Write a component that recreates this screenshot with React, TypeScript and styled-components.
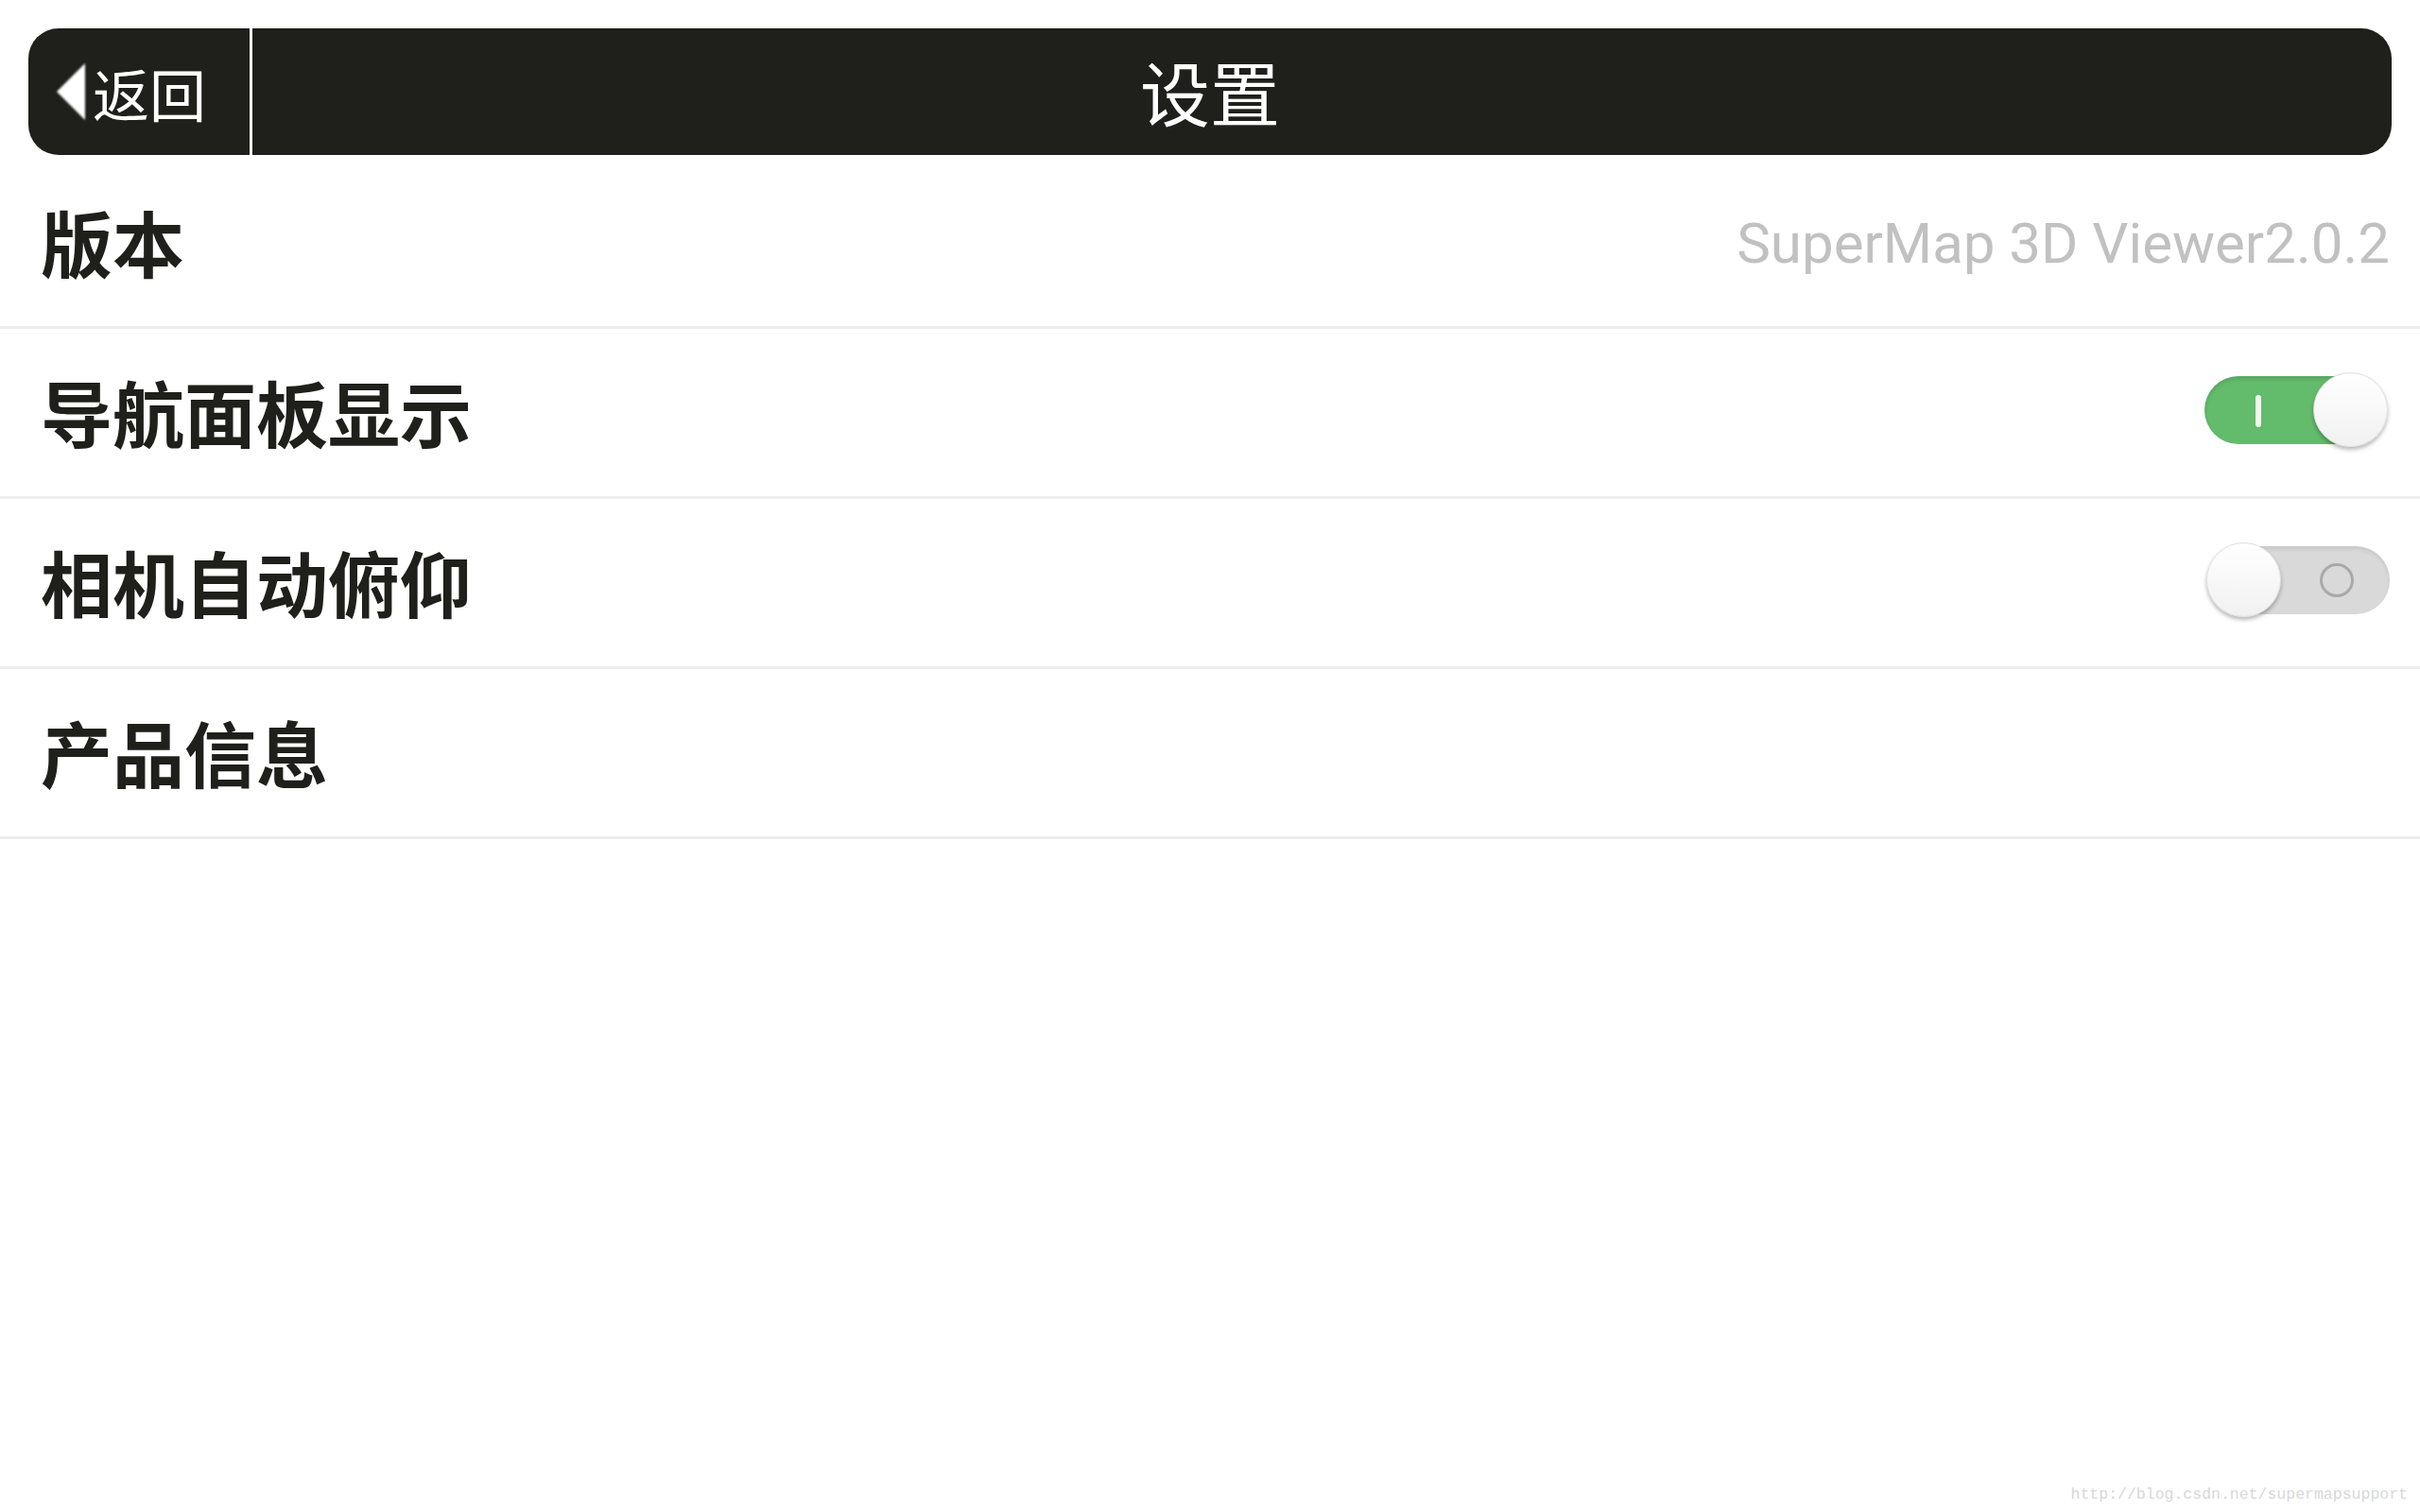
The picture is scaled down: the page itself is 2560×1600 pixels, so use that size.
import React from "react";
import styled, { createGlobalStyle } from "styled-components";

const GlobalStyle = createGlobalStyle`
  html, body {
    margin: 0;
    padding: 0;
    background: #ffffff;
  }
  body {
    width: 2560px;
    height: 1600px;
    overflow: hidden;
    font-family: "Noto Sans CJK SC", "Noto Sans", sans-serif;
  }
`;

const Page = styled.div`
  position: relative;
  width: 2560px;
  height: 1600px;
  background: #ffffff;
  display: flex;
  flex-direction: column;
`;

const Header = styled.header`
  margin: 30px 30px 0;
  height: 134px;
  background: #1f1f1b;
  border-radius: 32px;
  display: grid;
  grid-template-columns: 237px 1fr 237px;
  align-items: stretch;
  overflow: hidden;
`;

const BackButton = styled.button`
  display: flex;
  align-items: center;
  gap: 8px;
  padding: 0 0 0 30px;
  margin: 0;
  border: none;
  border-right: 3px solid #ffffff;
  background: transparent;
  color: #ffffff;
  font-family: "Noto Sans CJK SC", sans-serif;
  font-size: 60px;
  font-weight: 400;
  line-height: 1;
  cursor: pointer;
`;

const BackArrow = styled.span`
  width: 0;
  height: 0;
  border-top: 30px solid transparent;
  border-bottom: 30px solid transparent;
  border-right: 30px solid #ffffff;
  filter: blur(0.8px);
`;

const BackLabel = styled.span`
  display: block;
  margin-top: 2px;
`;

const Title = styled.h1`
  margin: 0;
  display: flex;
  align-items: center;
  justify-content: center;
  color: #ffffff;
  font-family: "Noto Sans CJK SC", sans-serif;
  font-size: 74px;
  font-weight: 400;
  line-height: 1;
  padding-bottom: 2px;
`;

const List = styled.div`
  display: flex;
  flex-direction: column;
  padding-top: 4px;
`;

const Row = styled.div`
  height: 177px;
  border-bottom: 3px solid #ededed;
  display: flex;
  align-items: center;
  justify-content: space-between;
  padding: 0 30px 0 43px;
`;

const Label = styled.span`
  color: #1f1f1b;
  font-family: "Noto Sans CJK SC", sans-serif;
  font-size: 76px;
  font-weight: 700;
  line-height: 1;
  margin-top: -4px;
`;

const Value = styled.span`
  color: #c1c1c1;
  font-family: Roboto, "Noto Sans", sans-serif;
  font-size: 60px;
  font-weight: 400;
  line-height: 1;
  margin-right: 2px;
  margin-top: 2px;
`;

const SwitchBox = styled.div<{ $on: boolean }>`
  position: relative;
  width: 196px;
  height: 80px;
  margin-top: -6px;
  margin-right: ${(p) => (p.$on ? "4px" : "0px")};
`;

const Track = styled.div<{ $on: boolean }>`
  position: absolute;
  top: 4px;
  bottom: 4px;
  left: 2px;
  right: 2px;
  border-radius: 36px;
  background: ${(p) => (p.$on ? "#63bb6c" : "#d9d9d9")};
  box-shadow: inset 0 3px 4px rgba(0, 0, 0, ${(p) => (p.$on ? 0.12 : 0.08)});
`;

const OnMark = styled.span`
  position: absolute;
  left: 54px;
  top: 20px;
  width: 6px;
  height: 34px;
  border-radius: 3px;
  background: rgba(255, 255, 255, 0.9);
`;

const OffMark = styled.span`
  position: absolute;
  right: 38px;
  top: 18px;
  width: 30px;
  height: 30px;
  border-radius: 50%;
  border: 3px solid #a9a9a9;
`;

const Knob = styled.span<{ $on: boolean }>`
  position: absolute;
  top: 0;
  ${(p) => (p.$on ? "right: 0;" : "left: 0;")}
  width: 77px;
  height: 77px;
  border-radius: 50%;
  background: linear-gradient(#ffffff, #f1f1f1);
  border: 1px solid #dedede;
  box-shadow: 0 3px 4px rgba(0, 0, 0, 0.28);
`;

const Watermark = styled.div`
  position: absolute;
  right: 13px;
  bottom: 10px;
  color: #d8d8d8;
  font-family: "Liberation Mono", monospace;
  font-size: 16.5px;
  line-height: 1;
`;

function Toggle({ on }: { on: boolean }) {
  return (
    <SwitchBox $on={on}>
      <Track $on={on}>{on ? <OnMark /> : <OffMark />}</Track>
      <Knob $on={on} />
    </SwitchBox>
  );
}

export default function App() {
  return (
    <Page>
      <GlobalStyle />
      <Header>
        <BackButton>
          <BackArrow />
          <BackLabel>返回</BackLabel>
        </BackButton>
        <Title>设置</Title>
        <div />
      </Header>
      <List>
        <Row>
          <Label>版本</Label>
          <Value>SuperMap 3D Viewer2.0.2</Value>
        </Row>
        <Row>
          <Label>导航面板显示</Label>
          <Toggle on={true} />
        </Row>
        <Row>
          <Label>相机自动俯仰</Label>
          <Toggle on={false} />
        </Row>
        <Row>
          <Label>产品信息</Label>
        </Row>
      </List>
      <Watermark>http://blog.csdn.net/supermapsupport</Watermark>
    </Page>
  );
}
